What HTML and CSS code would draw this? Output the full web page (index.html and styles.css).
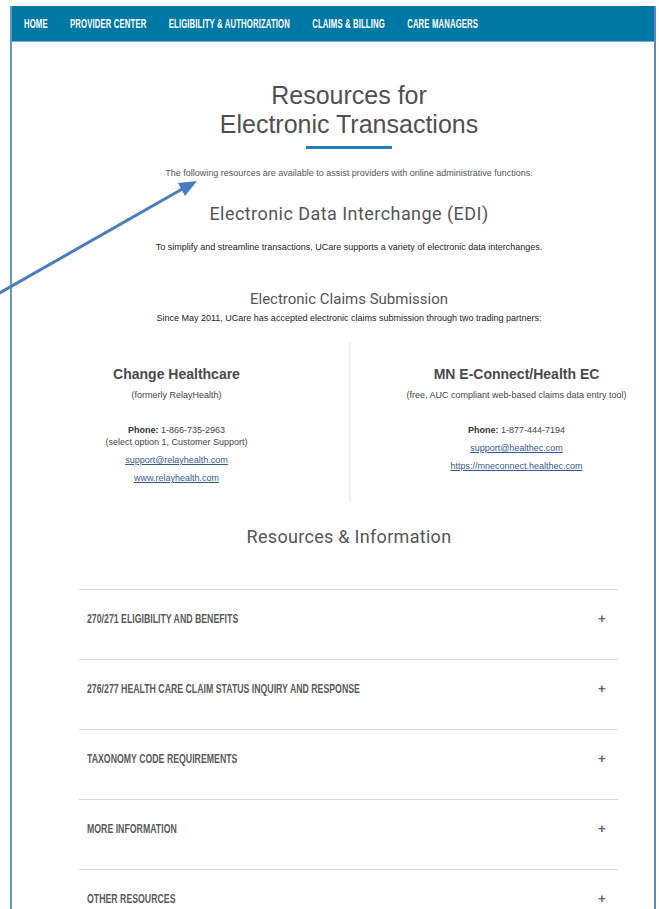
FILE: index.html
```html
<!DOCTYPE html>
<html lang="en">
<head>
<meta charset="utf-8">
<title>Resources for Electronic Transactions</title>
<link rel="stylesheet" href="styles.css">
</head>
<body>
<div class="frame">
  <nav class="topnav">
    <ul class="topnav-list">
      <li><a href="#">Home</a></li>
      <li><a href="#">Provider Center</a></li>
      <li><a href="#">Eligibility &amp; Authorization</a></li>
      <li><a href="#">Claims &amp; Billing</a></li>
      <li><a href="#">Care Managers</a></li>
    </ul>
  </nav>

  <main class="content">
    <h1 class="page-title">Resources for<br>Electronic Transactions</h1>
    <div class="title-rule"></div>
    <p class="intro">The following resources are available to assist providers with online administrative functions.</p>

    <h2 class="section-title">Electronic Data Interchange (EDI)</h2>
    <p class="lead">To simplify and streamline transactions, UCare supports a variety of electronic data interchanges.</p>

    <h3 class="sub-title">Electronic Claims Submission</h3>
    <p class="lead lead-tight">Since May 2011, UCare has accepted electronic claims submission through two trading partners:</p>

    <div class="partners">
      <section class="partner partner-left">
        <h4 class="partner-name">Change Healthcare</h4>
        <p class="partner-note">(formerly RelayHealth)</p>
        <p class="partner-line partner-phone"><strong>Phone:</strong> 1-866-735-2963</p>
        <p class="partner-line">(select option 1, Customer Support)</p>
        <p class="partner-line partner-link"><a href="#">support@relayhealth.com</a></p>
        <p class="partner-line partner-link"><a href="#">www.relayhealth.com</a></p>
      </section>
      <section class="partner partner-right">
        <h4 class="partner-name">MN E-Connect/Health EC</h4>
        <p class="partner-note">(free, AUC compliant web-based claims data entry tool)</p>
        <p class="partner-line partner-phone"><strong>Phone:</strong> 1-877-444-7194</p>
        <p class="partner-line partner-link"><a href="#">support@healthec.com</a></p>
        <p class="partner-line partner-link"><a href="#">https://mneconnect.healthec.com</a></p>
      </section>
    </div>

    <h2 class="section-title section-resources">Resources &amp; Information</h2>

    <div class="accordion">
      <div class="acc-row"><span class="acc-title">270/271 Eligibility and Benefits</span><span class="acc-plus">+</span></div>
      <div class="acc-row"><span class="acc-title">276/277 Health Care Claim Status Inquiry and Response</span><span class="acc-plus">+</span></div>
      <div class="acc-row"><span class="acc-title">Taxonomy Code Requirements</span><span class="acc-plus">+</span></div>
      <div class="acc-row"><span class="acc-title">More Information</span><span class="acc-plus">+</span></div>
      <div class="acc-row"><span class="acc-title">Other Resources</span><span class="acc-plus">+</span></div>
    </div>
  </main>
</div>

<svg class="callout" width="659" height="909" viewBox="0 0 659 909" aria-hidden="true">
  <line x1="-4" y1="295" x2="184" y2="188" stroke="#4a7cc0" stroke-width="3"/>
  <polygon points="197,181 185,196 178,183" fill="#4a7cc0"/>
</svg>
</body>
</html>
```

FILE: styles.css
```css
* {
  box-sizing: border-box;
}

html, body {
  margin: 0;
  padding: 0;
  background: #fff;
}

body {
  font-family: "Liberation Sans", Arial, sans-serif;
  color: #555;
  position: relative;
  height: 909px;
  overflow: hidden;
}

.frame {
  margin: 6px 3px 0 10px;
  border-left: 2px solid #6894cc;
  border-right: 2px solid #5b87c4;
  min-height: 903px;
}

/* top navigation */
.topnav {
  background: #0078a5;
  height: 36px;
  border-bottom: 1px solid #78aed0;
  display: flex;
  align-items: center;
  padding-left: 12px;
}

.topnav-list {
  list-style: none;
  margin: 0;
  padding: 0;
  display: flex;
  gap: 36px;
  transform: scaleX(0.62);
  transform-origin: left center;
  white-space: nowrap;
}

.topnav-list a {
  color: #fff;
  text-decoration: none;
  text-transform: uppercase;
  font-weight: 700;
  font-size: 12.5px;
  line-height: 14px;
  letter-spacing: 0.2px;
  display: block;
}

/* page body */
.content {
  padding-left: 32px;
  text-align: center;
}

.page-title {
  margin: 39px 0 0;
  font-size: 25px;
  line-height: 29px;
  font-weight: 400;
  color: #505050;
}

.title-rule {
  width: 86px;
  height: 3px;
  background: #237fb4;
  margin: 7px auto 0;
}

.intro {
  margin: 18px 0 0;
  font-size: 9px;
  line-height: 12px;
  color: #555;
}

.section-title {
  margin: 24px 0 0;
  font-family: Roboto, "Liberation Sans", sans-serif;
  font-weight: 400;
  font-size: 18px;
  line-height: 22px;
  letter-spacing: 0.45px;
  color: #555;
}

.lead {
  margin: 16px 0 0;
  font-size: 9px;
  line-height: 12px;
  color: #222;
}

.sub-title {
  margin: 37px 0 0;
  font-family: Roboto, "Liberation Sans", sans-serif;
  font-weight: 400;
  font-size: 15px;
  line-height: 18px;
  color: #555;
}

.lead-tight {
  margin-top: 4px;
}

/* trading partners */
.partners {
  margin-top: 18px;
  display: grid;
  grid-template-columns: 1fr 1fr;
  height: 160px;
}

.partner {
  padding-top: 24px;
}

.partner-left {
  padding-right: 40px;
}

.partner-right {
  padding-left: 28px;
  border-left: 2px solid #efefef;
}

.partner-name {
  margin: 0;
  font-size: 14px;
  line-height: 17px;
  font-weight: 700;
  color: #4a4a4a;
}

.partner-note {
  margin: 6px 0 0;
  font-size: 9px;
  line-height: 12px;
  color: #444;
}

.partner-line {
  margin: 0;
  font-size: 9px;
  line-height: 12px;
  color: #444;
}

.partner-line strong {
  color: #333;
}

.partner-phone {
  margin-top: 23px;
}

.partner-link {
  margin-top: 6px;
}

.partner-link a {
  color: #35598f;
  text-decoration: underline;
}

.section-resources {
  margin-top: 24px;
  letter-spacing: 0.3px;
}

/* accordion */
.accordion {
  margin: 41px 36px 0 35px;
  text-align: left;
}

.acc-row {
  border-top: 1px solid #dadada;
  height: 70px;
  padding: 23px 0 0 8px;
  display: flex;
  justify-content: space-between;
}

.acc-title {
  display: block;
  font-size: 12.5px;
  line-height: 12px;
  font-weight: 700;
  text-transform: uppercase;
  color: #5a5a5a;
  white-space: nowrap;
  transform: scaleX(0.7);
  transform-origin: left center;
}

.acc-plus {
  width: 20px;
  font-size: 13px;
  line-height: 12px;
  font-weight: 700;
  color: #4a6890;
}

/* callout arrow */
.callout {
  position: absolute;
  top: 0;
  left: 0;
  pointer-events: none;
}
```
